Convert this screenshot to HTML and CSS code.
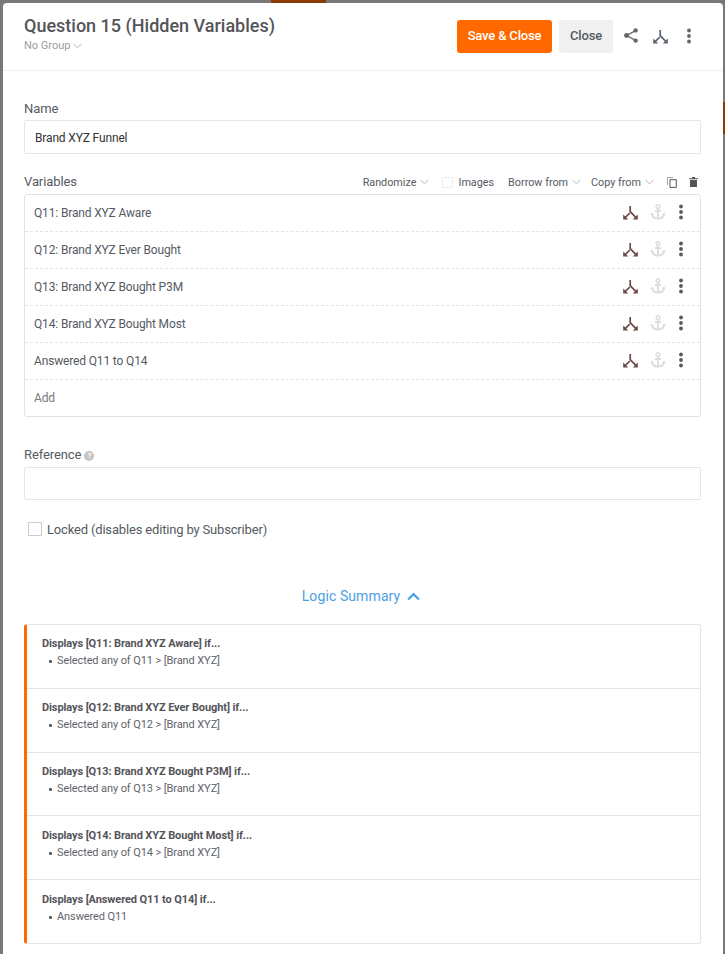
FILE: index.html
```html
<!DOCTYPE html>
<html lang="en">
<head>
<meta charset="utf-8">
<title>Question 15 (Hidden Variables)</title>
<link rel="stylesheet" href="styles.css">
</head>
<body>
<svg width="0" height="0" class="defs" aria-hidden="true">
  <symbol id="split" viewBox="0 0 15 14">
    <path d="M7.2 0V5.6L13 11.6" fill="none" stroke="currentColor" stroke-width="1.7"/>
    <path d="M6.8 7L2.4 11.4" fill="none" stroke="currentColor" stroke-width="1.7"/>
    <path d="M.2 8.6V13.6H5.2Z M14.8 8.6V13.6H9.8Z" fill="currentColor"/>
  </symbol>
  <symbol id="anchor" viewBox="0 0 16 16">
    <circle cx="8" cy="2.6" r="1.8" fill="none" stroke="currentColor" stroke-width="1.5"/>
    <path d="M8 4.5V14.5M5 7H11M1.8 9.5C2.3 12.8 5 14.6 8 14.6S13.7 12.8 14.2 9.5" fill="none" stroke="currentColor" stroke-width="1.8"/>
    <path d="M.2 11L2 8.4L3.8 11Z M12.2 11L14 8.4L15.8 11Z" fill="currentColor"/>
  </symbol>
  <symbol id="dots" viewBox="0 0 6 16">
    <circle cx="3" cy="2.5" r="1.9" fill="currentColor"/>
    <circle cx="3" cy="8" r="1.9" fill="currentColor"/>
    <circle cx="3" cy="13.5" r="1.9" fill="currentColor"/>
  </symbol>
  <symbol id="caret" viewBox="0 0 10 6">
    <path d="M.7.8L5 5L9.3.8" fill="none" stroke="currentColor" stroke-width="1"/>
  </symbol>
</svg>

<div class="backdrop-tab"></div>
<div class="backdrop-edge"></div>

<main class="modal">
  <header class="modal-head">
    <div class="head-titles">
      <h1 class="title">Question 15 (Hidden Variables)</h1>
      <div class="group">No Group <svg class="caret"><use href="#caret"/></svg></div>
    </div>
    <div class="head-actions">
      <button class="btn btn-save">Save &amp; Close</button>
      <button class="btn btn-close">Close</button>
      <svg class="head-share" viewBox="0 0 14 15" aria-hidden="true">
        <path d="M11.6 2.6L2.6 7.5L11.6 12.4" fill="none" stroke="currentColor" stroke-width="1.3"/>
        <circle cx="11.6" cy="2.4" r="2.2" fill="currentColor"/>
        <circle cx="2.5" cy="7.5" r="2.4" fill="currentColor"/>
        <circle cx="11.6" cy="12.6" r="2.2" fill="currentColor"/>
      </svg>
      <svg class="head-split"><use href="#split"/></svg>
      <svg class="head-dots"><use href="#dots"/></svg>
    </div>
  </header>

  <section class="body">
    <label class="label label-name">Name</label>
    <div class="input input-name">Brand XYZ Funnel</div>

    <div class="var-head">
      <span class="label label-var">Variables</span>
      <div class="var-tools">
        <span class="tool tool-rand">Randomize <svg class="caret"><use href="#caret"/></svg></span>
        <span class="tool tool-images"><i class="mini-check"></i>Images</span>
        <span class="tool tool-borrow">Borrow from <svg class="caret"><use href="#caret"/></svg></span>
        <span class="tool tool-copy">Copy from <svg class="caret"><use href="#caret"/></svg></span>
        <svg class="tool-icon tool-dup" viewBox="0 0 10 11" aria-hidden="true">
          <path d="M.5 8V.5H6" fill="none" stroke="#a5a5a5"/>
          <path d="M3 2.7H9.3V10.4H3Z" fill="none" stroke="#555" stroke-width="1"/>
        </svg>
        <svg class="tool-icon tool-trash" viewBox="0 0 9 10" aria-hidden="true">
          <path d="M0 1.2H3V0H6V1.2H9V2.2H0ZM1 3H8V10H1Z" fill="#555"/>
        </svg>
      </div>
    </div>

    <div class="var-box">
      <div class="var-row"><span class="var-name">Q11: Brand XYZ Aware</span><span class="var-icons"><svg class="ic-split"><use href="#split"/></svg><svg class="ic-anchor"><use href="#anchor"/></svg><svg class="ic-dots"><use href="#dots"/></svg></span></div>
      <div class="var-row"><span class="var-name">Q12: Brand XYZ Ever Bought</span><span class="var-icons"><svg class="ic-split"><use href="#split"/></svg><svg class="ic-anchor"><use href="#anchor"/></svg><svg class="ic-dots"><use href="#dots"/></svg></span></div>
      <div class="var-row"><span class="var-name">Q13: Brand XYZ Bought P3M</span><span class="var-icons"><svg class="ic-split"><use href="#split"/></svg><svg class="ic-anchor"><use href="#anchor"/></svg><svg class="ic-dots"><use href="#dots"/></svg></span></div>
      <div class="var-row"><span class="var-name">Q14: Brand XYZ Bought Most</span><span class="var-icons"><svg class="ic-split"><use href="#split"/></svg><svg class="ic-anchor"><use href="#anchor"/></svg><svg class="ic-dots"><use href="#dots"/></svg></span></div>
      <div class="var-row"><span class="var-name">Answered Q11 to Q14</span><span class="var-icons"><svg class="ic-split"><use href="#split"/></svg><svg class="ic-anchor"><use href="#anchor"/></svg><svg class="ic-dots"><use href="#dots"/></svg></span></div>
      <div class="var-row var-add"><span>Add</span></div>
    </div>

    <div class="label label-ref">Reference <span class="help">?</span></div>
    <div class="input input-ref"></div>

    <div class="locked"><i class="check"></i>Locked (disables editing by Subscriber)</div>

    <div class="summary-toggle">Logic Summary
      <svg class="summary-chevron" viewBox="0 0 12 8" aria-hidden="true"><path d="M1 6.8L6 1.8L11 6.8" fill="none" stroke="currentColor" stroke-width="2"/></svg>
    </div>

    <div class="logic-card">
      <div class="logic-row"><div class="logic-title">Displays [Q11: Brand XYZ Aware] if...</div><ul class="logic-list"><li>Selected any of Q11 &gt; [Brand XYZ]</li></ul></div>
      <div class="logic-row"><div class="logic-title">Displays [Q12: Brand XYZ Ever Bought] if...</div><ul class="logic-list"><li>Selected any of Q12 &gt; [Brand XYZ]</li></ul></div>
      <div class="logic-row"><div class="logic-title">Displays [Q13: Brand XYZ Bought P3M] if...</div><ul class="logic-list"><li>Selected any of Q13 &gt; [Brand XYZ]</li></ul></div>
      <div class="logic-row"><div class="logic-title">Displays [Q14: Brand XYZ Bought Most] if...</div><ul class="logic-list"><li>Selected any of Q14 &gt; [Brand XYZ]</li></ul></div>
      <div class="logic-row"><div class="logic-title">Displays [Answered Q11 to Q14] if...</div><ul class="logic-list"><li>Answered Q11</li></ul></div>
    </div>
  </section>
</main>
</body>
</html>
```
FILE: styles.css
```css
* { box-sizing: border-box; }
html, body { margin: 0; padding: 0; height: 100%; }
body {
  background: #787878;
  font-family: Roboto, "Liberation Sans", sans-serif;
  color: #555a63;
  overflow: hidden;
  position: relative;
}
.defs { position: absolute; }
.backdrop-tab { position: absolute; left: 271px; top: 0; width: 55px; height: 3px; background: #8a3c00; }
.backdrop-edge { position: absolute; right: 0; top: 102px; width: 2px; height: 32px; background: #8a3c00; }

.modal {
  position: relative;
  margin: 3px 2px 0 3px;
  height: 951px;
  background: #fff;
  border-radius: 4px 4px 0 0;
}
.modal-head {
  height: 68px;
  padding: 12px 31px 0 21px;
  border-bottom: 1px solid #eeeeee;
  display: flex;
  justify-content: space-between;
}
.title {
  margin: 0;
  font-size: 18px;
  line-height: 22px;
  font-weight: 500;
  color: #555459;
}
.group {
  margin-top: 2px;
  font-size: 11px;
  line-height: 14px;
  color: #9a9da3;
  display: flex;
  align-items: center;
  gap: 3px;
}
.caret { width: 9px; height: 6px; color: #a5a8ad; }
.head-actions { display: flex; align-items: flex-start; padding-top: 5px; }
.btn {
  height: 33px;
  border: 0;
  border-radius: 3px;
  font-family: inherit;
  font-size: 13px;
  letter-spacing: -0.17px;
  font-weight: 500;
  padding: 0 0 2px;
}
.btn-save { width: 95px; background: #ff6900; color: #fff; }
.btn-close { width: 54px; margin-left: 7px; background: #f0f0f0; color: #555a63; }
.head-share { width: 14px; height: 15px; margin: 8px 0 0 11px; color: #666666; }
.head-split { width: 15px; height: 14px; margin: 10px 0 0 15px; color: #5a6470; }
.head-dots { width: 6px; height: 16px; margin: 8px 0 0 18px; color: #666666; }

.body { padding: 30px 22px 0 21px; }
.label { font-size: 13px; letter-spacing: -0.1px; line-height: 16px; color: #555a63; display: block; }
.input {
  border: 1px solid #e6e6e6;
  border-radius: 2px;
  height: 34px;
  background: #fff;
}
.input-name {
  margin-top: 3px;
  padding: 1px 10px 0;
  line-height: 32px;
  font-size: 12px;
  letter-spacing: -0.15px;
  font-weight: 400;
  color: #333333;
}
.var-head {
  margin-top: 19px;
  height: 21px;
  display: flex;
  justify-content: space-between;
  align-items: flex-start;
}
.label-var { padding-top: 1px; }
.var-tools { display: flex; align-items: center; height: 16px; margin-top: 1px; font-size: 10.8px; color: #555a63; }
.tool { display: inline-flex; align-items: center; gap: 4px; white-space: nowrap; }
.mini-check { width: 11px; height: 11px; border: 1px solid #ececec; border-radius: 2px; margin-right: 1px; }
.tool-images { margin-left: 13px; }
.tool-borrow { margin-left: 14px; }
.tool-copy { margin-left: 10px; }
.tool-icon { display: block; }
.tool-dup { width: 10px; height: 11px; margin-left: 13px; }
.tool-trash { width: 9px; height: 10px; margin-left: 12px; margin-right: 3px; }

.var-box { border: 1px solid #e2e2e2; border-radius: 3px; height: 223px; }
.var-row {
  height: 37px;
  padding: 0 16px 0 9px;
  display: flex;
  align-items: center;
  justify-content: space-between;
  font-size: 12px;
  letter-spacing: -0.15px;
  border-bottom: 1px dashed #e4e4e4;
  color: #555a63;
}
.var-add { border-bottom: 0; height: 36px; color: #777a80; }
.var-icons { display: flex; align-items: center; }
.ic-split { width: 15px; height: 14px; color: #6e4a46; margin-top: -1px; }
.ic-anchor { width: 16px; height: 16px; margin-left: 12px; margin-top: -2px; color: #dddddd; }
.ic-dots { width: 6px; height: 16px; margin-left: 12px; margin-top: -2px; color: #555a63; }

.label-ref { margin-top: 30px; display: flex; align-items: center; gap: 3px; }
.help {
  width: 10px; height: 10px; border-radius: 50%;
  background: #c4c4c4; color: #fff;
  font-size: 8px; line-height: 10px; text-align: center; font-weight: 700;
  margin-top: 1px;
}
.input-ref { margin-top: 4px; height: 33px; }
.locked {
  margin: 22px 0 0 4px;
  height: 14px;
  display: flex;
  align-items: center;
  font-size: 13px;
  letter-spacing: -0.17px;
  color: #555a63;
}
.check { width: 14px; height: 14px; border: 1px solid #cccccc; margin-right: 5px; }

.summary-toggle {
  margin-top: 52px;
  height: 16px;
  padding-right: 3px;
  display: flex;
  justify-content: center;
  align-items: center;
  gap: 7px;
  font-size: 14px;
  letter-spacing: 0.1px;
  color: #4c9fe3;
}
.summary-chevron { width: 13px; height: 9px; }

.logic-card {
  margin-top: 20px;
  border: 1px solid #e4e4e4;
  border-left: 3px solid #ff6900;
  border-radius: 3px;
  height: 320px;
}
.logic-row {
  height: 63.8px;
  padding: 11.4px 15px 0;
  border-bottom: 1px solid #e4e4e4;
}
.logic-row:last-child { border-bottom: 0; }
.logic-title { font-size: 11px; letter-spacing: -0.1px; line-height: 16px; font-weight: 700; color: #555459; }
.logic-list {
  margin: 1px 0 0;
  padding: 0;
  list-style: none;
  font-size: 11px;
  letter-spacing: -0.1px;
  line-height: 16px;
  color: #5f636b;
}
.logic-list li { display: flex; align-items: center; }
.logic-list li::before {
  content: "";
  width: 3px;
  height: 3px;
  margin: 1px 5px 0 7px;
  border-radius: 1px;
  background: #555a63;
}
```
